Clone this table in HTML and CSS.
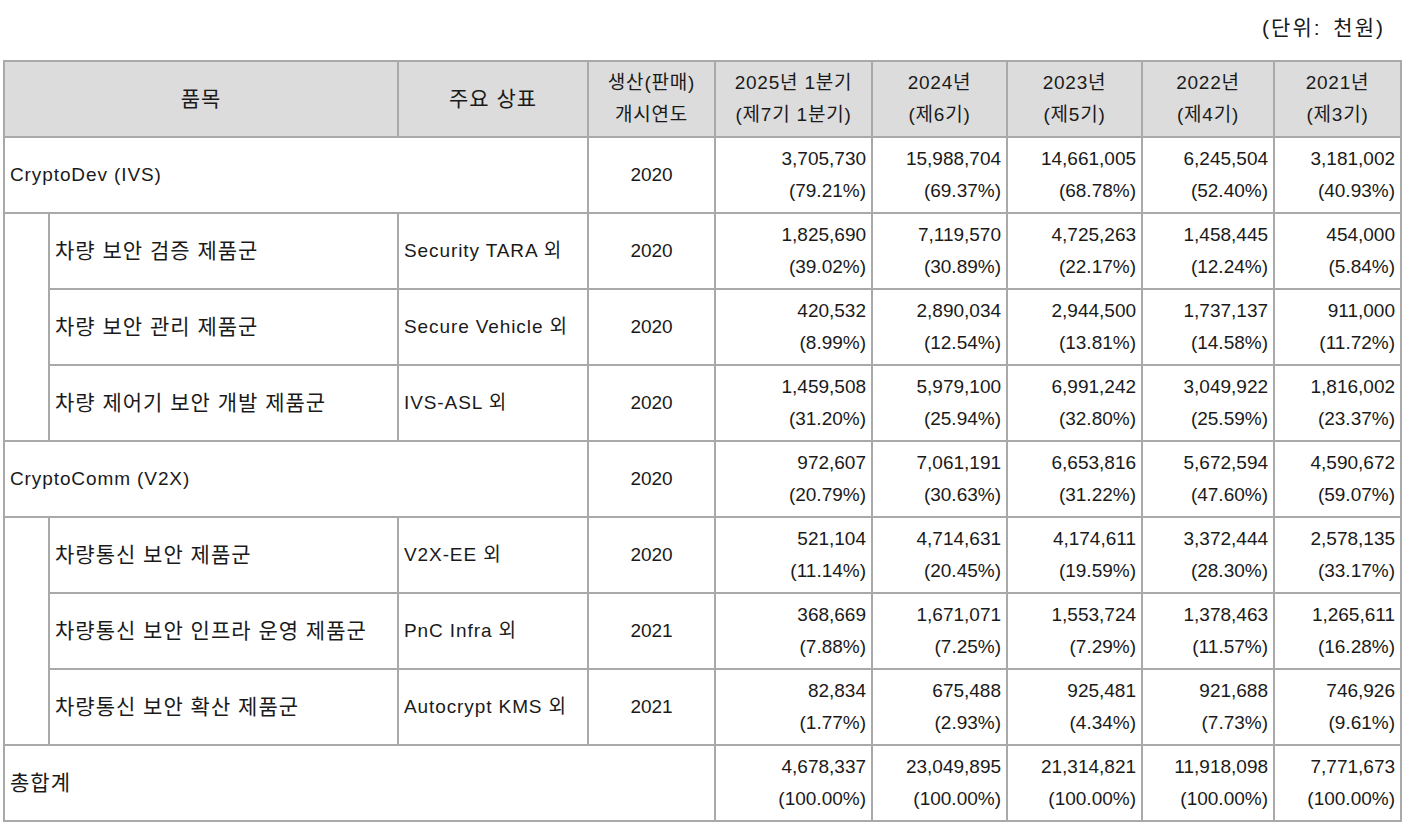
FILE: index.html
```html
<!DOCTYPE html>
<html lang="ko">
<head>
<meta charset="utf-8">
<title>매출 현황</title>
<link rel="stylesheet" href="styles.css">
</head>
<body>
<div class="page">
  <div class="unit">(단위: 천원)</div>
  <table class="sales">
    <colgroup>
      <col class="c-indent">
      <col class="c-name">
      <col class="c-brand">
      <col class="c-year">
      <col class="c-q">
      <col class="c-y">
      <col class="c-y">
      <col class="c-y2">
      <col class="c-y3">
    </colgroup>
    <thead>
      <tr>
        <th colspan="2" class="ko">품목</th>
        <th class="ko">주요 상표</th>
        <th class="hdr">생산(판매)<br>개시연도</th>
        <th class="hdr">2025년 1분기<br>(제7기 1분기)</th>
        <th class="hdr">2024년<br>(제6기)</th>
        <th class="hdr">2023년<br>(제5기)</th>
        <th class="hdr">2022년<br>(제4기)</th>
        <th class="hdr">2021년<br>(제3기)</th>
      </tr>
    </thead>
    <tbody>
      <tr>
        <td colspan="3" class="left lat">CryptoDev (IVS)</td>
        <td class="center">2020</td>
        <td class="num">3,705,730<br>(79.21%)</td>
        <td class="num">15,988,704<br>(69.37%)</td>
        <td class="num">14,661,005<br>(68.78%)</td>
        <td class="num">6,245,504<br>(52.40%)</td>
        <td class="num">3,181,002<br>(40.93%)</td>
      </tr>
      <tr>
        <td rowspan="3" class="indent"></td>
        <td class="left ko">차량 보안 검증 제품군</td>
        <td class="left lat">Security TARA 외</td>
        <td class="center">2020</td>
        <td class="num">1,825,690<br>(39.02%)</td>
        <td class="num">7,119,570<br>(30.89%)</td>
        <td class="num">4,725,263<br>(22.17%)</td>
        <td class="num">1,458,445<br>(12.24%)</td>
        <td class="num">454,000<br>(5.84%)</td>
      </tr>
      <tr>
        <td class="left ko">차량 보안 관리 제품군</td>
        <td class="left lat">Secure Vehicle 외</td>
        <td class="center">2020</td>
        <td class="num">420,532<br>(8.99%)</td>
        <td class="num">2,890,034<br>(12.54%)</td>
        <td class="num">2,944,500<br>(13.81%)</td>
        <td class="num">1,737,137<br>(14.58%)</td>
        <td class="num">911,000<br>(11.72%)</td>
      </tr>
      <tr>
        <td class="left ko">차량 제어기 보안 개발 제품군</td>
        <td class="left lat">IVS-ASL 외</td>
        <td class="center">2020</td>
        <td class="num">1,459,508<br>(31.20%)</td>
        <td class="num">5,979,100<br>(25.94%)</td>
        <td class="num">6,991,242<br>(32.80%)</td>
        <td class="num">3,049,922<br>(25.59%)</td>
        <td class="num">1,816,002<br>(23.37%)</td>
      </tr>
      <tr>
        <td colspan="3" class="left lat">CryptoComm (V2X)</td>
        <td class="center">2020</td>
        <td class="num">972,607<br>(20.79%)</td>
        <td class="num">7,061,191<br>(30.63%)</td>
        <td class="num">6,653,816<br>(31.22%)</td>
        <td class="num">5,672,594<br>(47.60%)</td>
        <td class="num">4,590,672<br>(59.07%)</td>
      </tr>
      <tr>
        <td rowspan="3" class="indent"></td>
        <td class="left ko">차량통신 보안 제품군</td>
        <td class="left lat">V2X-EE 외</td>
        <td class="center">2020</td>
        <td class="num">521,104<br>(11.14%)</td>
        <td class="num">4,714,631<br>(20.45%)</td>
        <td class="num">4,174,611<br>(19.59%)</td>
        <td class="num">3,372,444<br>(28.30%)</td>
        <td class="num">2,578,135<br>(33.17%)</td>
      </tr>
      <tr>
        <td class="left ko">차량통신 보안 인프라 운영 제품군</td>
        <td class="left lat">PnC Infra 외</td>
        <td class="center">2021</td>
        <td class="num">368,669<br>(7.88%)</td>
        <td class="num">1,671,071<br>(7.25%)</td>
        <td class="num">1,553,724<br>(7.29%)</td>
        <td class="num">1,378,463<br>(11.57%)</td>
        <td class="num">1,265,611<br>(16.28%)</td>
      </tr>
      <tr>
        <td class="left ko">차량통신 보안 확산 제품군</td>
        <td class="left lat">Autocrypt KMS 외</td>
        <td class="center">2021</td>
        <td class="num">82,834<br>(1.77%)</td>
        <td class="num">675,488<br>(2.93%)</td>
        <td class="num">925,481<br>(4.34%)</td>
        <td class="num">921,688<br>(7.73%)</td>
        <td class="num">746,926<br>(9.61%)</td>
      </tr>
      <tr>
        <td colspan="4" class="left ko">총합계</td>
        <td class="num">4,678,337<br>(100.00%)</td>
        <td class="num">23,049,895<br>(100.00%)</td>
        <td class="num">21,314,821<br>(100.00%)</td>
        <td class="num">11,918,098<br>(100.00%)</td>
        <td class="num">7,771,673<br>(100.00%)</td>
      </tr>
    </tbody>
  </table>
</div>
</body>
</html>
```

FILE: styles.css
```css
html, body {
  margin: 0;
  padding: 0;
  background: #ffffff;
}

body {
  font-family: "Liberation Sans", "Noto Sans CJK KR", sans-serif;
  font-size: 19px;
  color: #1a1a1a;
}

.page {
  padding: 0 3px 0 3px;
}

.unit {
  height: 60px;
  box-sizing: border-box;
  padding: 14px 15px 0 0;
  text-align: right;
  line-height: 28px;
  font-size: 21px;
  letter-spacing: 2px;
  word-spacing: 4px;
}

.sales {
  width: 1397px;
  table-layout: fixed;
  border-collapse: collapse;
  border: 2px solid #3a3a3a;
}

.c-indent { width: 45px; }
.c-name { width: 349px; }
.c-brand { width: 190px; }
.c-year { width: 127px; }
.c-q { width: 157px; }
.c-y { width: 135px; }
.c-y2 { width: 132px; }
.c-y3 { width: 127px; }

.sales th,
.sales td {
  border: 2px solid #a9a9a9;
  height: 74px;
  padding: 0;
  line-height: 32px;
  font-weight: normal;
  white-space: nowrap;
  overflow: hidden;
}

.sales th {
  background: #dcdcdc;
  text-align: center;
  vertical-align: middle;
}

.sales th.hdr {
  letter-spacing: 0.8px;
}

.sales .ko {
  font-size: 21px;
  letter-spacing: 1px;
}

.sales .lat {
  letter-spacing: 0.9px;
}

.sales td.left {
  text-align: left;
  padding-left: 5px;
}

.sales td.ko.left {
  padding-left: 5px;
}

.sales td.center {
  text-align: center;
}

.sales td.num {
  text-align: right;
  padding-right: 5px;
}
```
